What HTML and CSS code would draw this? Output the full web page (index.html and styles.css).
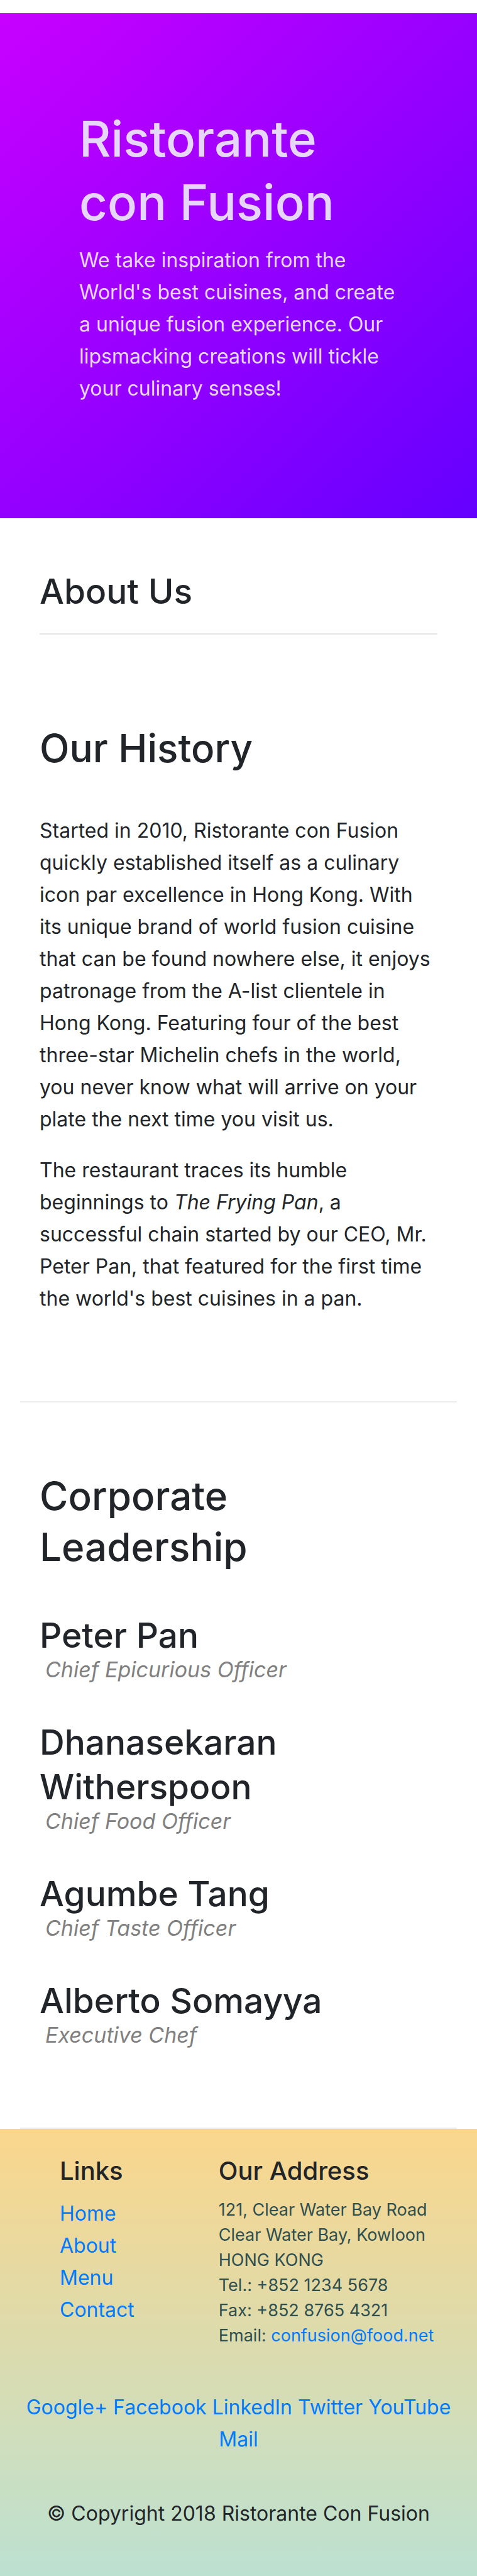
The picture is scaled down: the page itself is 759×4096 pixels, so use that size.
FILE: index.html
```html
<!DOCTYPE html>
<html lang="en">
<head>
  <meta charset="utf-8">
  <meta name="viewport" content="width=device-width, initial-scale=1">
  <title>Ristorante Con Fusion: About Us</title>
  <link rel="stylesheet" href="styles.css">
</head>
<body>
  <header class="jumbotron">
    <h1 class="jumbotron-title">Ristorante con Fusion</h1>
    <p class="text">We take inspiration from the World's best cuisines, and create a unique fusion experience. Our lipsmacking creations will tickle your culinary senses!</p>
  </header>

  <main class="container">
    <section class="page-title">
      <h3 class="heading-small">About Us</h3>
      <hr class="rule">
    </section>

    <section class="history">
      <h2 class="heading">Our History</h2>
      <p class="text">Started in 2010, Ristorante con Fusion quickly established itself as a culinary icon par excellence in Hong Kong. With its unique brand of world fusion cuisine that can be found nowhere else, it enjoys patronage from the A-list clientele in Hong Kong. Featuring four of the best three-star Michelin chefs in the world, you never know what will arrive on your plate the next time you visit us.</p>
      <p class="text">The restaurant traces its humble beginnings to <em>The Frying Pan</em>, a successful chain started by our CEO, Mr. Peter Pan, that featured for the first time the world's best cuisines in a pan.</p>
    </section>

    <section class="leadership">
      <h2 class="heading">Corporate<br>Leadership</h2>
      <ul class="leaders">
        <li>
          <h3 class="heading-small">Peter Pan</h3>
          <p class="role">Chief Epicurious Officer</p>
        </li>
        <li>
          <h3 class="heading-small">Dhanasekaran<br>Witherspoon</h3>
          <p class="role">Chief Food Officer</p>
        </li>
        <li>
          <h3 class="heading-small">Agumbe Tang</h3>
          <p class="role">Chief Taste Officer</p>
        </li>
        <li>
          <h3 class="heading-small">Alberto Somayya</h3>
          <p class="role">Executive Chef</p>
        </li>
      </ul>
    </section>
  </main>

  <footer class="footer">
    <div class="footer-columns">
      <nav class="footer-links">
        <h5 class="footer-heading">Links</h5>
        <ul class="text link-list">
          <li><a href="#">Home</a></li>
          <li><a href="#">About</a></li>
          <li><a href="#">Menu</a></li>
          <li><a href="#">Contact</a></li>
        </ul>
      </nav>
      <div class="footer-address">
        <h5 class="footer-heading">Our Address</h5>
        <address class="address">
          121, Clear Water Bay Road<br>
          Clear Water Bay, Kowloon<br>
          HONG KONG<br>
          Tel.: +852 1234 5678<br>
          Fax: +852 8765 4321<br>
          Email: <a href="mailto:confusion@food.net">confusion@food.net</a>
        </address>
      </div>
    </div>
    <div class="text social">
      <a href="#">Google+</a>
      <a href="#">Facebook</a>
      <a href="#">LinkedIn</a>
      <a href="#">Twitter</a>
      <a href="#">YouTube</a>
      <a href="#">Mail</a>
    </div>
    <p class="text copyright">© Copyright 2018 Ristorante Con Fusion</p>
  </footer>
</body>
</html>
```

FILE: styles.css
```css
* {
  box-sizing: border-box;
}

body {
  margin: 0;
  padding-top: 21px;
  background: #fff;
  color: #212529;
  font-family: Inter, "Liberation Sans", sans-serif;
}

h1, h2, h3, h5, p, ul {
  margin: 0;
  padding: 0;
  font-weight: 550;
}

ul {
  list-style: none;
}

a {
  color: #007bff;
  text-decoration: none;
}

.text {
  font-size: 32px;
  font-weight: 400;
  line-height: 51px;
}

.heading {
  font-size: 62px;
  line-height: 81px;
}

.heading-small {
  font-size: 55px;
  line-height: 71px;
}

.jumbotron {
  padding: 149px 120px 181px 126px;
  background: linear-gradient(135deg, #c800ff, #6400ff);
  color: #e6d7fa;
}

.jumbotron-title {
  margin-bottom: 16px;
  font-size: 78px;
  line-height: 101px;
}

.container {
  padding: 81px 32px 0;
}

.page-title {
  padding: 0 31px;
}

.rule {
  height: 2px;
  margin: 31px 0 0;
  border: 0;
  background: #e5e5e5;
}

.history,
.leadership {
  border-bottom: 2px solid #ececec;
}

.history {
  padding: 140px 31px 138px;
}

.history .heading {
  margin-bottom: 65px;
}

.history .text + .text {
  margin-top: 30px;
}

.leadership {
  padding: 108px 31px 128px;
}

.leaders {
  display: grid;
  gap: 61px;
  margin-top: 65px;
}

.role {
  padding-left: 9px;
  color: #808080;
  font-size: 34px;
  font-style: italic;
  font-weight: 400;
  line-height: 38px;
}

.footer {
  padding: 41px 32px 74px;
  background: linear-gradient(#fad68c, #bce1d1);
}

.footer-columns {
  display: grid;
  grid-template-columns: 2fr 3fr;
  padding-left: 63px;
}

.footer-heading {
  margin-bottom: 17px;
  font-size: 40px;
  line-height: 51px;
}

.address {
  color: #2f4f4f;
  font-size: 27px;
  font-style: normal;
  line-height: 40px;
}

.social {
  margin-top: 68px;
  text-align: center;
}

.copyright {
  margin-top: 67px;
  text-align: center;
}
```
